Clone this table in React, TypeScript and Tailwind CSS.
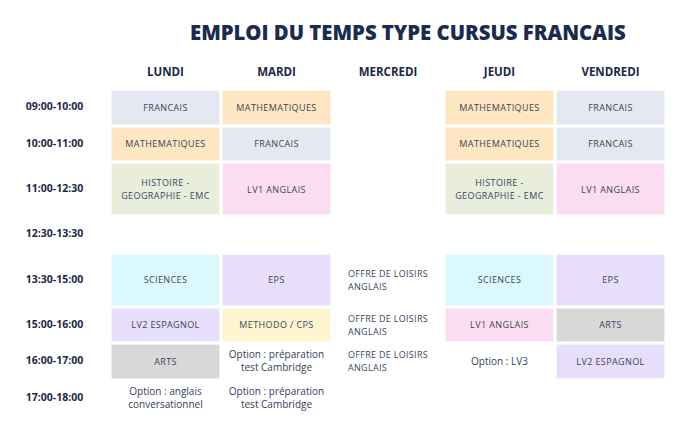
type Cell = { text?: string; bg?: string; kind?: "subject" | "option" | "loisir" };

const FR = "bg-[#e4e8f0]";
const MA = "bg-[#fde6c1]";
const HI = "bg-[#e9eedc]";
const LV1 = "bg-[#fcdcf1]";
const SC = "bg-[#dbf8fd]";
const EPS = "bg-[#e7ddfd]";
const ME = "bg-[#fef5d0]";
const AR = "bg-[#d8d8d8]";

const days = ["LUNDI", "MARDI", "MERCREDI", "JEUDI", "VENDREDI"];

// short rows are 34.5px, long blocks (1h30) are 52px
const S = "h-[34.5px]";
const L = "h-[52px]";

const rows: { time: string; h: string; cells: Cell[] }[] = [
  {
    time: "09:00-10:00",
    h: S,
    cells: [
      { text: "FRANCAIS", bg: FR },
      { text: "MATHEMATIQUES", bg: MA },
      {},
      { text: "MATHEMATIQUES", bg: MA },
      { text: "FRANCAIS", bg: FR },
    ],
  },
  {
    time: "10:00-11:00",
    h: S,
    cells: [
      { text: "MATHEMATIQUES", bg: MA },
      { text: "FRANCAIS", bg: FR },
      {},
      { text: "MATHEMATIQUES", bg: MA },
      { text: "FRANCAIS", bg: FR },
    ],
  },
  {
    time: "11:00-12:30",
    h: L,
    cells: [
      { text: "HISTOIRE -\nGEOGRAPHIE - EMC", bg: HI },
      { text: "LV1 ANGLAIS", bg: LV1 },
      {},
      { text: "HISTOIRE -\nGEOGRAPHIE - EMC", bg: HI },
      { text: "LV1 ANGLAIS", bg: LV1 },
    ],
  },
  { time: "12:30-13:30", h: S, cells: [{}, {}, {}, {}, {}] },
  {
    time: "13:30-15:00",
    h: L,
    cells: [
      { text: "SCIENCES", bg: SC },
      { text: "EPS", bg: EPS },
      { text: "OFFRE DE LOISIRS\nANGLAIS", kind: "loisir" },
      { text: "SCIENCES", bg: SC },
      { text: "EPS", bg: EPS },
    ],
  },
  {
    time: "15:00-16:00",
    h: S,
    cells: [
      { text: "LV2 ESPAGNOL", bg: EPS },
      { text: "METHODO / CPS", bg: ME },
      { text: "OFFRE DE LOISIRS\nANGLAIS", kind: "loisir" },
      { text: "LV1 ANGLAIS", bg: LV1 },
      { text: "ARTS", bg: AR },
    ],
  },
  {
    time: "16:00-17:00",
    h: S,
    cells: [
      { text: "ARTS", bg: AR },
      { text: "Option : préparation\ntest Cambridge", kind: "option" },
      { text: "OFFRE DE LOISIRS\nANGLAIS", kind: "loisir" },
      { text: "Option : LV3", kind: "option" },
      { text: "LV2 ESPAGNOL", bg: EPS },
    ],
  },
  {
    time: "17:00-18:00",
    h: S,
    cells: [
      { text: "Option : anglais\nconversationnel", kind: "option" },
      { text: "Option : préparation\ntest Cambridge", kind: "option" },
      {},
      {},
      {},
    ],
  },
];

function Lines({ text }: { text: string }) {
  return (
    <>
      {text.split("\n").map((l, i) => (
        <span key={i} className="block">
          {l}
        </span>
      ))}
    </>
  );
}

function SlotCell({ cell, h }: { cell: Cell; h: string }) {
  if (!cell.text) return <div className={h}></div>;
  if (cell.kind === "loisir") {
    return (
      <div className={`${h} flex items-center justify-center`}>
        <div className="text-left text-[9px] tracking-[0.3px] leading-[13px] text-[#3a4560]">
          <Lines text={cell.text} />
        </div>
      </div>
    );
  }
  if (cell.kind === "option") {
    return (
      <div className={`${h} flex items-center justify-center text-center text-[10px] leading-[13px] text-[#34405a]`}>
        <div>
          <Lines text={cell.text} />
        </div>
      </div>
    );
  }
  return (
    <div
      className={`${h} ${cell.bg} flex items-center justify-center text-center text-[9px] tracking-[0.4px] leading-[13px] text-[#3a4560] border border-white/60`}
    >
      <div>
        <Lines text={cell.text} />
      </div>
    </div>
  );
}

export default function App() {
  return (
    <div
      className="w-[687px] h-[441px] bg-white overflow-hidden"
      style={{ fontFamily: '"Open Sans", "Liberation Sans", sans-serif' }}
    >
      <h1 className="pt-[20px] pl-[190px] text-[20.3px] leading-[24px] font-extrabold text-[#1a2b50] whitespace-nowrap">
        EMPLOI DU TEMPS TYPE CURSUS FRANCAIS
      </h1>

      <div className="mt-[11px] grid grid-cols-[109px_109px_109px_110px_109px_109px] gap-[2px]">
        {/* header row */}
        <div className="h-[33px]"></div>
        {days.map((d) => (
          <div
            key={d}
            className="h-[33px] flex items-center justify-center text-[11.5px] font-bold text-[#1c2845]"
          >
            {d}
          </div>
        ))}

        {rows.map((r) => (
          <>
            <div
              key={r.time}
              className={`${r.h} flex items-center justify-center text-[10.5px] font-bold text-[#1c2845]`}
            >
              {r.time}
            </div>
            {r.cells.map((c, i) => (
              <SlotCell key={r.time + i} cell={c} h={r.h} />
            ))}
          </>
        ))}
      </div>
    </div>
  );
}
